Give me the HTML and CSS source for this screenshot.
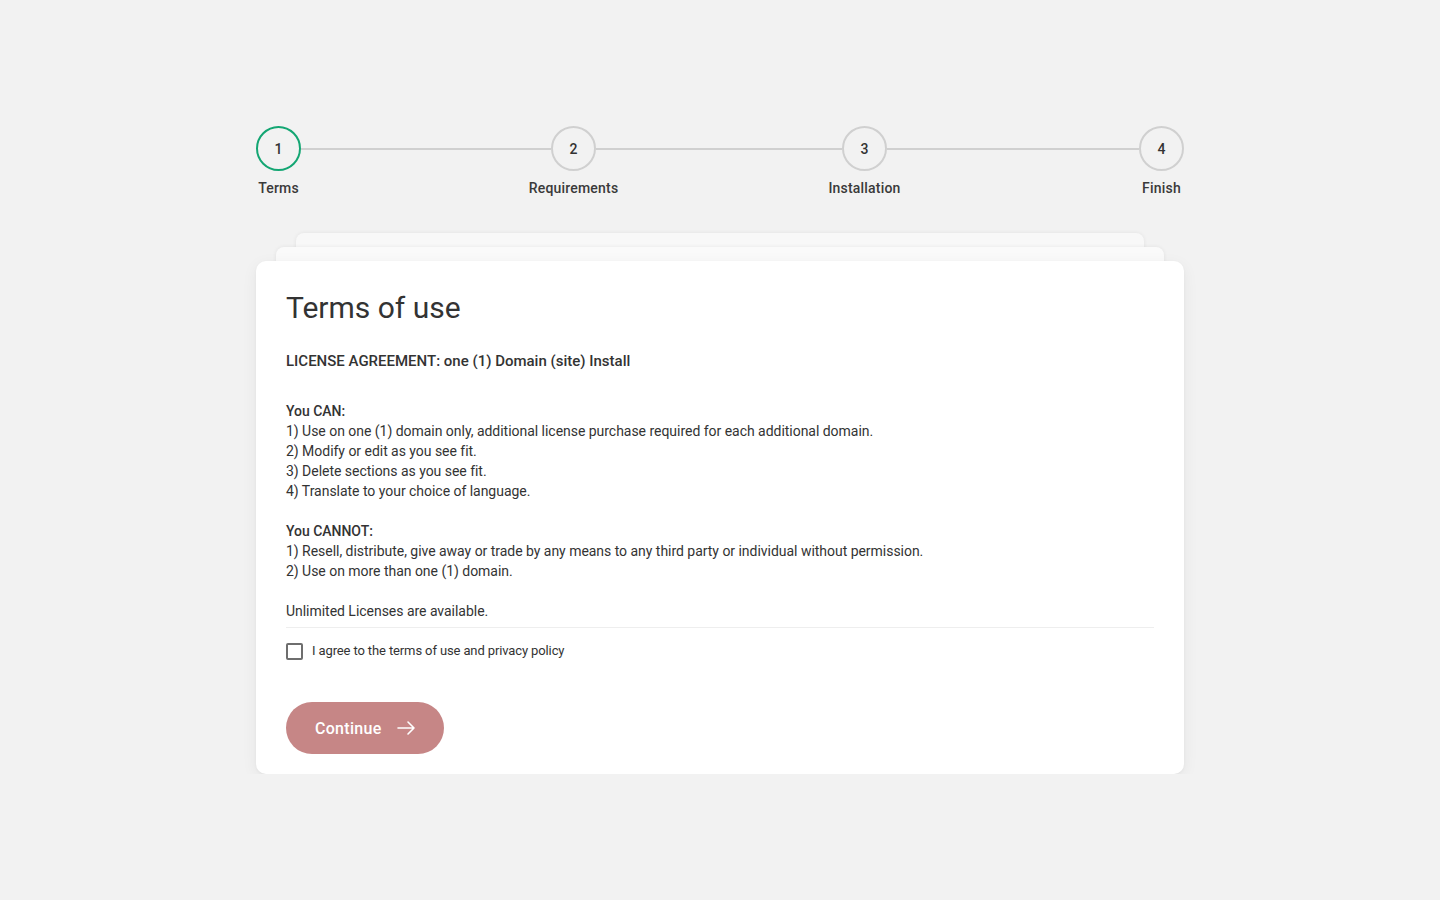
FILE: index.html
```html
<!DOCTYPE html>
<html lang="en">
<head>
<meta charset="utf-8">
<title>Install - Terms</title>
<link rel="stylesheet" href="styles.css">
</head>
<body>
<div class="wrap">
  <div class="stepper">
    <div class="step active"><div class="circle">1</div><div class="label">Terms</div></div>
    <div class="line l1"></div>
    <div class="step"><div class="circle">2</div><div class="label">Requirements</div></div>
    <div class="line l2"></div>
    <div class="step"><div class="circle">3</div><div class="label">Installation</div></div>
    <div class="line l3"></div>
    <div class="step"><div class="circle">4</div><div class="label">Finish</div></div>
  </div>

  <div class="stack">
    <div class="sheet sheet-back2"></div>
    <div class="sheet sheet-back1"></div>
    <div class="card">
      <h1 class="title">Terms of use</h1>
      <p class="lead">LICENSE AGREEMENT: one (1) Domain (site) Install</p>
      <div class="terms">
        <p><strong>You CAN:</strong><br>
        1) Use on one (1) domain only, additional license purchase required for each additional domain.<br>
        2) Modify or edit as you see fit.<br>
        3) Delete sections as you see fit.<br>
        4) Translate to your choice of language.</p>
        <p><strong>You CANNOT:</strong><br>
        1) Resell, distribute, give away or trade by any means to any third party or individual without permission.<br>
        2) Use on more than one (1) domain.</p>
        <p>Unlimited Licenses are available.</p>
      </div>
      <label class="agree"><span class="box"></span><span>I agree to the terms of use and privacy policy</span></label>
      <button class="btn" type="button">Continue
        <svg width="20" height="20" viewBox="0 0 20 20" fill="none" stroke="#fff" stroke-width="1.6" stroke-linecap="round" stroke-linejoin="round"><path d="M2 10h16M12 4l6 6-6 6"/></svg>
      </button>
    </div>
  </div>
</div>
</body>
</html>
```

FILE: styles.css
```css
html, body {
  margin: 0;
  padding: 0;
  background: #f2f2f2;
}
body {
  font-family: Roboto, "Liberation Sans", Arial, sans-serif;
  color: #333;
}
.wrap {
  width: 928px;
  margin: 0 auto;
  padding-top: 126px;
}
.stepper {
  display: grid;
  grid-template-columns: 45px 250fr 45px 246fr 45px 252fr 45px;
  align-items: start;
}
.step {
  display: flex;
  flex-direction: column;
  align-items: center;
  width: 45px;
}
.circle {
  box-sizing: border-box;
  width: 45px;
  height: 45px;
  border-radius: 50%;
  border: 2px solid #d0d0d0;
  display: flex;
  align-items: center;
  justify-content: center;
  font-size: 14px;
  font-weight: 500;
  color: #333;
}
.step.active .circle {
  border-color: #14a673;
}
.label {
  margin-top: 9px;
  font-size: 14px;
  font-weight: 500;
  color: #3a3a3a;
  white-space: nowrap;
  letter-spacing: 0.2px;
}
.line {
  height: 2px;
  background: #d0d0d0;
  margin-top: 22px;
}
.stack {
  margin-top: 37px;
  display: flex;
  flex-direction: column;
}
.sheet {
  height: 28px;
  background: #f9f9f9;
  border-radius: 8px 8px 0 0;
  box-shadow: 0 0 4px rgba(0,0,0,0.07);
}
.sheet-back2 {
  margin: 0 40px -14px;
  background: #f8f8f8;
}
.sheet-back1 {
  margin: 0 20px -14px;
  background: #fafafa;
}
.card {
  position: relative;
  background: #fff;
  border-radius: 10px;
  box-shadow: 0 4px 16px rgba(0,0,0,0.06), 0 1px 3px rgba(0,0,0,0.04);
  padding: 28px 30px 20px;
}
.title {
  margin: 0;
  font-size: 30px;
  font-weight: 400;
  line-height: 38px;
  color: #333;
}
.lead {
  margin: 24px 0 0;
  font-size: 15px;
  font-weight: 500;
  line-height: 20px;
  color: #333;
}
.terms {
  margin-top: 30px;
  font-size: 14px;
  line-height: 20px;
  color: #333;
  letter-spacing: -0.03px;
  padding-bottom: 6px;
  border-bottom: 1px solid #eeeeee;
}
.terms p {
  margin: 0 0 20px;
}
.terms p:last-child {
  margin-bottom: 0;
}
.terms strong {
  font-weight: 500;
}
.agree {
  display: flex;
  align-items: center;
  gap: 9px;
  margin-top: 14px;
  font-size: 13px;
  letter-spacing: -0.12px;
  color: #333;
  line-height: 18px;
}
.box {
  box-sizing: border-box;
  width: 17px;
  height: 17px;
  border: 2px solid #6e6e6e;
  border-radius: 2px;
}
.btn {
  margin-top: 42px;
  display: inline-flex;
  align-items: center;
  gap: 14px;
  height: 52px;
  padding: 0 28px 0 29px;
  border: none;
  border-radius: 26px;
  background: #c68686;
  color: #fff;
  font-family: Roboto, "Liberation Sans", Arial, sans-serif;
  font-size: 16px;
  font-weight: 500;
  letter-spacing: 0.3px;
}
```
